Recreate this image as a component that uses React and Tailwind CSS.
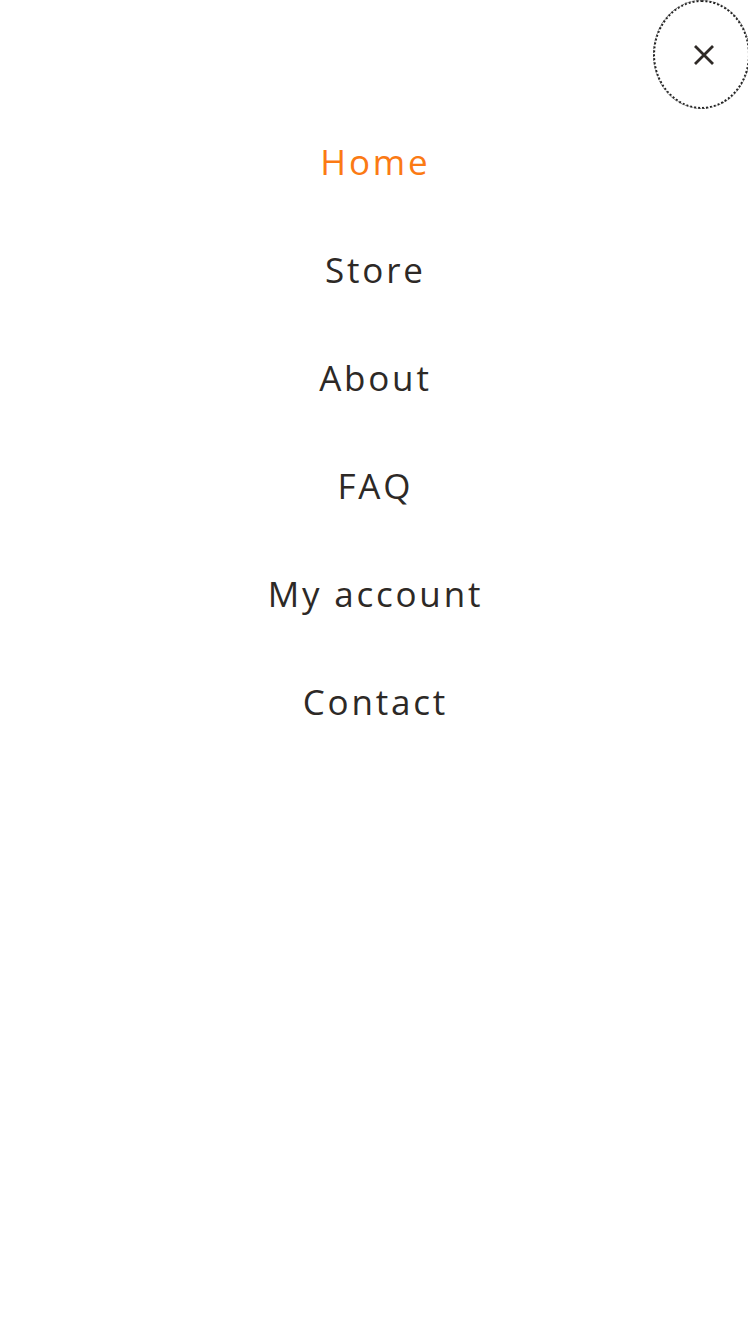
import React from "react";

const links = ["Home", "Store", "About", "FAQ", "My account", "Contact"];

export default function App() {
  return (
    <div
      className="min-h-[1332px] w-full overflow-hidden bg-white"
      style={{ fontFamily: '"Open Sans", "Noto Sans", sans-serif' }}
    >
      <div className="flex h-[108px] justify-end">
        <button className="-mr-[2px] flex h-[109px] w-[97px] items-center justify-center rounded-[50%] border-2 border-dotted border-[#1f1f1f] pl-[4px] outline-1 outline-dotted outline-offset-[-1px] outline-[#555]">
          <svg width="22" height="22" viewBox="0 0 22 22" fill="none">
            <path
              d="M2 2 L20 20 M20 2 L2 20"
              stroke="#2f2a27"
              strokeWidth="2.8"
              strokeLinecap="butt"
            />
          </svg>
        </button>
      </div>
      <nav className="flex flex-col">
        {links.map((l, i) => (
          <a
            key={l}
            href="#"
            className={
              "flex h-[108px] items-center justify-center pl-[0.08em] text-[35px] tracking-[0.08em] " +
              (i === 0 ? "text-[#fb7a14]" : "text-[#2d2926]")
            }
          >
            {l}
          </a>
        ))}
      </nav>
    </div>
  );
}
